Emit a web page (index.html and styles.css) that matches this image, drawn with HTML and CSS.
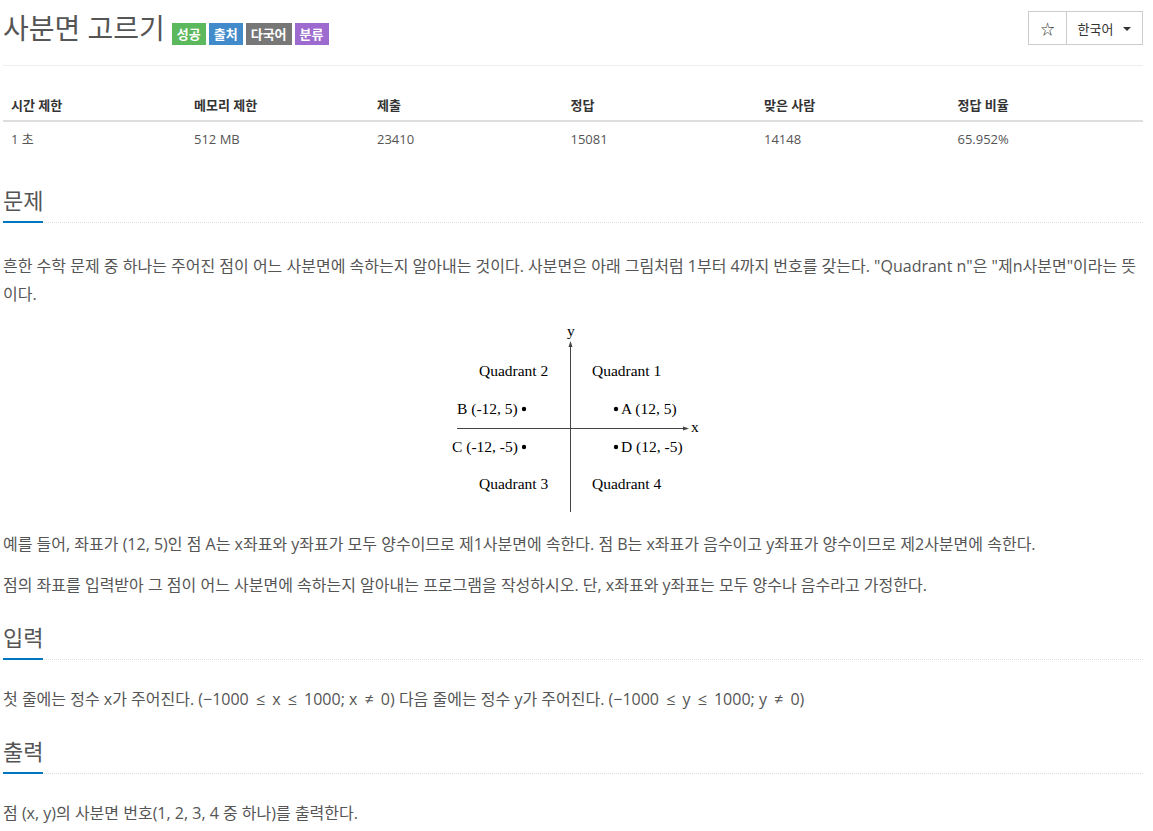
FILE: index.html
```html
<!DOCTYPE html>
<html lang="ko">
<head>
<meta charset="utf-8">
<title>사분면 고르기</title>
<link rel="stylesheet" href="styles.css">
</head>
<body>
<div class="container">
  <div class="page-header">
    <div class="title-wrap">
      <h1 class="title">사분면 고르기</h1>
      <span class="badge badge-green">성공</span>
      <span class="badge badge-blue">출처</span>
      <span class="badge badge-gray">다국어</span>
      <span class="badge badge-purple">분류</span>
    </div>
    <div class="btn-group">
      <span class="btn btn-star">☆</span>
      <span class="btn btn-lang">한국어 <span class="caret"></span></span>
    </div>
  </div>

  <table class="info-table">
    <thead>
      <tr>
        <th class="w16">시간 제한</th>
        <th class="w16">메모리 제한</th>
        <th class="w17">제출</th>
        <th class="w17">정답</th>
        <th class="w17">맞은 사람</th>
        <th class="w17">정답 비율</th>
      </tr>
    </thead>
    <tbody>
      <tr>
        <td>1 초</td>
        <td>512 MB</td>
        <td>23410</td>
        <td>15081</td>
        <td>14148</td>
        <td>65.952%</td>
      </tr>
    </tbody>
  </table>

  <section class="problem-section">
    <div class="headline"><h2>문제</h2></div>
    <div class="problem-text first-text">
      <p>흔한 수학 문제 중 하나는 주어진 점이 어느 사분면에 속하는지 알아내는 것이다. 사분면은 아래 그림처럼 1부터 4까지 번호를 갖는다. "Quadrant n"은 "제n사분면"이라는 뜻이다.</p>
      <div class="figure">
        <svg class="diagram" width="266" height="196" viewBox="0 0 266 196" xmlns="http://www.w3.org/2000/svg">
          <g stroke="#444" stroke-width="1" fill="none">
            <line x1="130.5" y1="25" x2="130.5" y2="191"/>
            <line x1="17" y1="107.5" x2="244" y2="107.5"/>
          </g>
          <g fill="#444">
            <polygon points="130.5,20 128.5,26 132.5,26"/>
            <polygon points="249,107.5 243,105.5 243,109.5"/>
          </g>
          <g fill="#000" font-family="'Liberation Serif', serif" font-size="15.5">
            <text x="127" y="15">y</text>
            <text x="251" y="111">x</text>
            <text x="39" y="55">Quadrant 2</text>
            <text x="152" y="55">Quadrant 1</text>
            <text x="17" y="93">B (-12, 5)</text>
            <text x="181" y="93">A (12, 5)</text>
            <text x="12" y="131">C (-12, -5)</text>
            <text x="181" y="131">D (12, -5)</text>
            <text x="39" y="168">Quadrant 3</text>
            <text x="152" y="168">Quadrant 4</text>
            <circle cx="84" cy="88" r="2.2"/>
            <circle cx="176" cy="88" r="2.2"/>
            <circle cx="84" cy="126" r="2.2"/>
            <circle cx="176" cy="126" r="2.2"/>
          </g>
        </svg>
      </div>
      <p>예를 들어, 좌표가 (12, 5)인 점 A는 x좌표와 y좌표가 모두 양수이므로 제1사분면에 속한다. 점 B는 x좌표가 음수이고 y좌표가 양수이므로 제2사분면에 속한다.</p>
      <p>점의 좌표를 입력받아 그 점이 어느 사분면에 속하는지 알아내는 프로그램을 작성하시오. 단, x좌표와 y좌표는 모두 양수나 음수라고 가정한다.</p>
    </div>
  </section>

  <section class="problem-section">
    <div class="headline"><h2>입력</h2></div>
    <div class="problem-text">
      <p>첫 줄에는 정수 x가 주어진다. (−1000 <span class="op">≤</span> x <span class="op">≤</span> 1000; x <span class="op">≠</span> 0) 다음 줄에는 정수 y가 주어진다. (−1000 <span class="op">≤</span> y <span class="op">≤</span> 1000; y <span class="op">≠</span> 0)</p>
    </div>
  </section>

  <section class="problem-section">
    <div class="headline"><h2>출력</h2></div>
    <div class="problem-text">
      <p>점 (x, y)의 사분면 번호(1, 2, 3, 4 중 하나)를 출력한다.</p>
    </div>
  </section>
</div>
</body>
</html>
```

FILE: styles.css
```css
html, body {
  margin: 0;
  padding: 0;
  background: #fff;
}

body {
  font-family: "Open Sans", "Noto Sans CJK KR", sans-serif;
  color: #555;
  font-size: 16px;
}

.container {
  width: 1140px;
  margin-left: 3px;
}

.page-header {
  display: flex;
  justify-content: space-between;
  align-items: flex-start;
  padding: 11px 0 20px;
  border-bottom: 1px solid #eee;
}

.title-wrap {
  display: flex;
  align-items: flex-start;
}

.title {
  margin: 0 7px 0 0;
  font-size: 28px;
  line-height: 34px;
  font-weight: normal;
  color: #555;
}

.badge {
  display: inline-block;
  margin-top: 12px;
  margin-right: 3px;
  padding: 0 5px;
  height: 22px;
  line-height: 22px;
  font-size: 13px;
  font-weight: bold;
  color: #fff;
}

.badge-green { background: #5cb85c; }
.badge-blue { background: #428bca; }
.badge-gray { background: #777; }
.badge-purple { background: #9d6bcf; }

.btn-group {
  display: flex;
  height: 34px;
  border: 1px solid #ccc;
  box-sizing: border-box;
}

.btn {
  display: flex;
  align-items: center;
  justify-content: center;
  font-size: 13px;
  color: #333;
  box-sizing: border-box;
}

.btn-star {
  width: 38px;
  border-right: 1px solid #ccc;
  font-size: 14px;
}

.btn-lang {
  width: 75px;
  gap: 10px;
  padding-left: 0;
}

.caret {
  display: inline-block;
  width: 0;
  height: 0;
  border-left: 4px solid transparent;
  border-right: 4px solid transparent;
  border-top: 4px solid #333;
  margin-top: 2px;
}

.info-table {
  width: 100%;
  margin-top: 20px;
  border-collapse: collapse;
  font-size: 13px;
  table-layout: fixed;
}

.info-table th,
.info-table td {
  text-align: left;
  padding: 8px;
  line-height: 18px;
}

.info-table th {
  padding-top: 10px;
  padding-bottom: 6px;
  color: #333;
  font-weight: bold;
  border-bottom: 2px solid #ddd;
}

.info-table td {
  color: #555;
}

.w16 { width: 16%; }
.w17 { width: 17%; }

.problem-section {
  padding-top: 10px;
}

.problem-section:first-of-type {
  padding-top: 29px;
}

.headline {
  border-bottom: 1px dotted #ddd;
  margin-bottom: 25px;
}

.headline h2 {
  display: inline-block;
  margin: 0 0 -1px;
  padding-bottom: 6px;
  font-size: 22px;
  line-height: 30px;
  font-weight: normal;
  color: #555;
  border-bottom: 2px solid #0076c0;
}

.problem-text p {
  margin: 0 0 13px;
  line-height: 28px;
}

.first-text {
  padding-top: 4px;
}

.figure {
  margin: 0 0 13px;
}

.diagram {
  display: block;
  margin: 0 auto;
}

.op {
  margin: 0 3px;
}
```
